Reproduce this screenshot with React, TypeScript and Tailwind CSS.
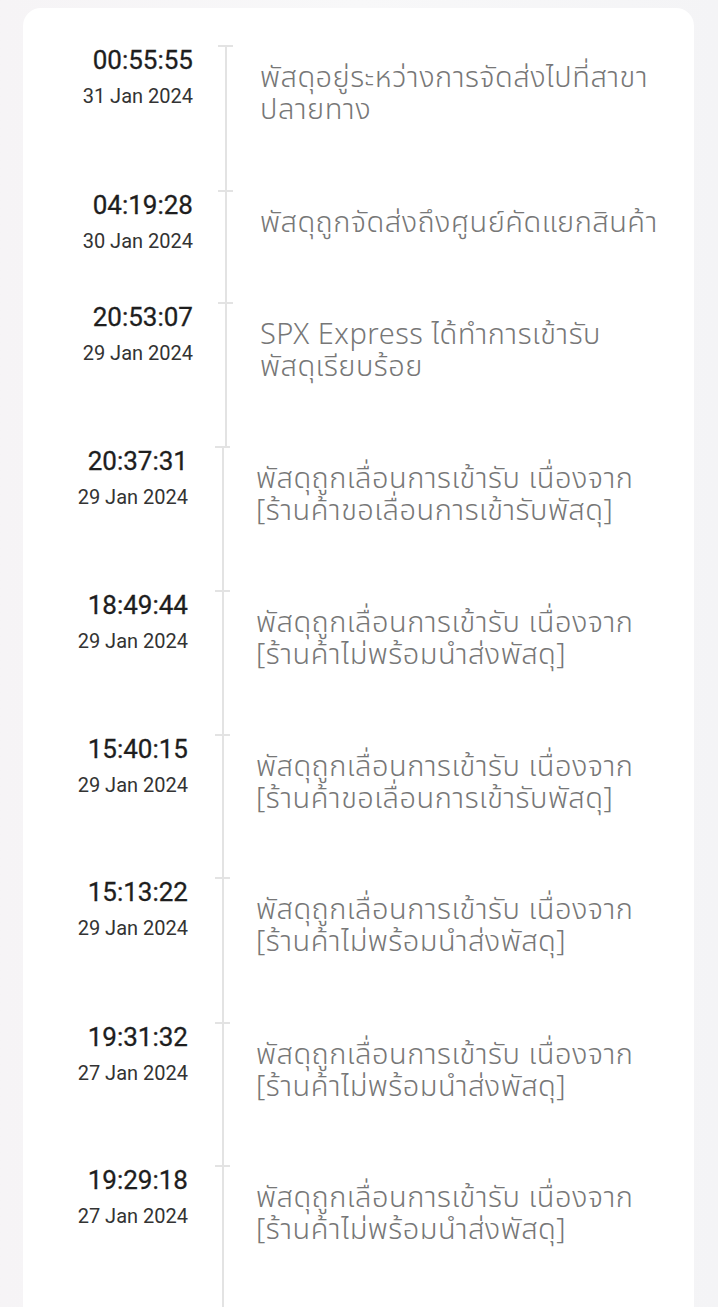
type Track = {
    time: string;
    date: string;
    lines: string[];
    h: number;
    shift?: boolean;
};

const tracks: Track[] = [
    { time: '00:55:55', date: '31 Jan 2024', lines: ['พัสดุอยู่ระหว่างการจัดส่งไปที่สาขา', 'ปลายทาง'], h: 145 },
    { time: '04:19:28', date: '30 Jan 2024', lines: ['พัสดุถูกจัดส่งถึงศูนย์คัดแยกสินค้า'], h: 112 },
    { time: '20:53:07', date: '29 Jan 2024', lines: ['SPX Express ได้ทำการเข้ารับ', 'พัสดุเรียบร้อย'], h: 144 },
    { time: '20:37:31', date: '29 Jan 2024', lines: ['พัสดุถูกเลื่อนการเข้ารับ เนื่องจาก', '[ร้านค้าขอเลื่อนการเข้ารับพัสดุ]'], h: 144, shift: true },
    { time: '18:49:44', date: '29 Jan 2024', lines: ['พัสดุถูกเลื่อนการเข้ารับ เนื่องจาก', '[ร้านค้าไม่พร้อมนำส่งพัสดุ]'], h: 144, shift: true },
    { time: '15:40:15', date: '29 Jan 2024', lines: ['พัสดุถูกเลื่อนการเข้ารับ เนื่องจาก', '[ร้านค้าขอเลื่อนการเข้ารับพัสดุ]'], h: 143, shift: true },
    { time: '15:13:22', date: '29 Jan 2024', lines: ['พัสดุถูกเลื่อนการเข้ารับ เนื่องจาก', '[ร้านค้าไม่พร้อมนำส่งพัสดุ]'], h: 145, shift: true },
    { time: '19:31:32', date: '27 Jan 2024', lines: ['พัสดุถูกเลื่อนการเข้ารับ เนื่องจาก', '[ร้านค้าไม่พร้อมนำส่งพัสดุ]'], h: 143, shift: true },
    { time: '19:29:18', date: '27 Jan 2024', lines: ['พัสดุถูกเลื่อนการเข้ารับ เนื่องจาก', '[ร้านค้าไม่พร้อมนำส่งพัสดุ]'], h: 142, shift: true },
];

function Row({ t }: { t: Track }) {
    return (
        <div className="flex" style={{ height: t.h }}>
            <div className={t.shift ? 'w-[165px] text-right' : 'w-[170px] text-right'}>
                <div className="text-[26px] leading-[30px] text-[#1e1e1e] font-['Roboto',sans-serif] [-webkit-text-stroke:0.3px_#1e1e1e]">{t.time}</div>
                <div className="text-[20px] leading-[26px] mt-[8px] text-[#333] font-['Roboto',sans-serif]">{t.date}</div>
            </div>
            <div className={t.shift ? 'w-[36px] flex justify-end' : 'w-[34px] flex justify-end'}>
                <div className="relative w-[2px] bg-[#e3e3e3]">
                    <div className="absolute top-0 -left-[7px] w-[15px] h-[2px] bg-[#e3e3e3]" />
                </div>
            </div>
            <div className={t.shift ? 'pl-[32px] pt-[17px]' : 'pl-[33px] pt-[17px]'}>
                {t.lines.map((l) => (
                    <div key={l} className="text-[29px] leading-[32px] tracking-[0.5px] font-light text-[#777] font-['Noto_Sans_Thai','Noto_Sans',sans-serif] whitespace-nowrap">
                        {l}
                    </div>
                ))}
            </div>
        </div>
    );
}

export default function App() {
    return (
        <div className="min-h-[1307px] bg-gradient-to-r from-[#f6f4f6] via-[#f8f8f9] to-[#f4f4f6] pt-[8px] overflow-hidden">
            <div className="ml-[23px] w-[671px] bg-white rounded-t-[18px] pt-[37px]">
                {tracks.map((t) => (
                    <Row key={t.time} t={t} />
                ))}
            </div>
        </div>
    );
}
